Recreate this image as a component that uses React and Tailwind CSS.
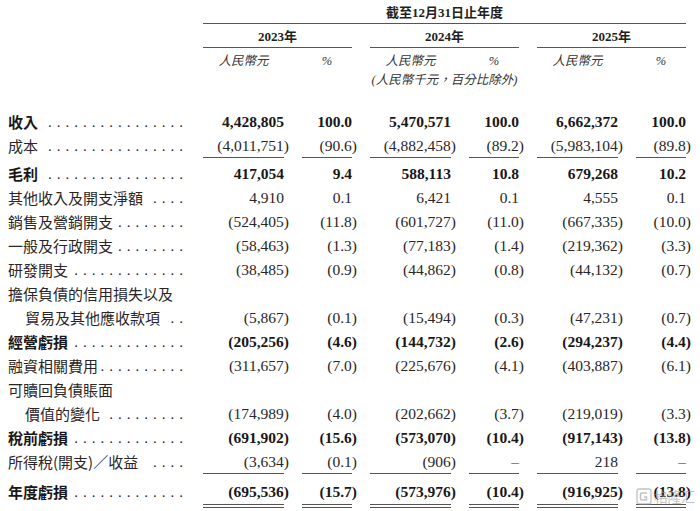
import React from "react";

const GRID = "grid grid-cols-[185px_81px_50px_81px_50px_81px_50px] gap-x-[18px]";

const rows = [
  { label: "收入", bold: true, dots: 16, v: ["4,428,805", "100.0", "5,470,571", "100.0", "6,662,372", "100.0"] },
  { label: "成本", dots: 16, v: ["(4,011,751)", "(90.6)", "(4,882,458)", "(89.2)", "(5,983,104)", "(89.8)"], under: "single" },
  { label: "毛利", bold: true, dots: 16, v: ["417,054", "9.4", "588,113", "10.8", "679,268", "10.2"], mt: "mt-[4px]" },
  { label: "其他收入及開支淨額", dots: 4, v: ["4,910", "0.1", "6,421", "0.1", "4,555", "0.1"] },
  { label: "銷售及營銷開支", dots: 8, v: ["(524,405)", "(11.8)", "(601,727)", "(11.0)", "(667,335)", "(10.0)"] },
  { label: "一般及行政開支", dots: 8, v: ["(58,463)", "(1.3)", "(77,183)", "(1.4)", "(219,362)", "(3.3)"] },
  { label: "研發開支", dots: 13, v: ["(38,485)", "(0.9)", "(44,862)", "(0.8)", "(44,132)", "(0.7)"] },
  { label: "擔保負債的信用損失以及", dots: 0 },
  { label: "貿易及其他應收款項", indent: true, dots: 2, v: ["(5,867)", "(0.1)", "(15,494)", "(0.3)", "(47,231)", "(0.7)"] },
  { label: "經營虧損", bold: true, dots: 13, v: ["(205,256)", "(4.6)", "(144,732)", "(2.6)", "(294,237)", "(4.4)"] },
  { label: "融資相關費用", dots: 10, v: ["(311,657)", "(7.0)", "(225,676)", "(4.1)", "(403,887)", "(6.1)"] },
  { label: "可贖回負債賬面", dots: 0 },
  { label: "價值的變化", indent: true, dots: 9, v: ["(174,989)", "(4.0)", "(202,662)", "(3.7)", "(219,019)", "(3.3)"] },
  { label: "稅前虧損", bold: true, dots: 13, v: ["(691,902)", "(15.6)", "(573,070)", "(10.4)", "(917,143)", "(13.8)"] },
  { label: "所得稅(開支)／收益", dots: 4, v: ["(3,634)", "(0.1)", "(906)", "–", "218", "–"], under: "single" },
  { label: "年度虧損", bold: true, dots: 13, v: ["(695,536)", "(15.7)", "(573,976)", "(10.4)", "(916,925)", "(13.8)"], under: "double", mt: "mt-[6px]" },
];

function Label({ r }) {
  return (
    <div className={`flex items-stretch min-w-0 ${r.indent ? "pl-[25px]" : "pl-[8px]"}`}>
      <span
        className={`whitespace-nowrap font-['Noto_Sans_CJK_TC','Noto_Sans_CJK_SC',sans-serif] text-[15px] leading-[24px] ${
          r.bold ? "font-bold text-[#1a1718]" : "text-[#2a2627]"
        }`}
      >
        {r.label}
      </span>
      {r.dots > 0 && (
        <span className="ml-auto whitespace-nowrap font-['Liberation_Serif',serif] text-[15px] leading-[24px] tracking-[5px] -mr-[3px] text-[#2a2627]">
          {".".repeat(r.dots)}
        </span>
      )}
    </div>
  );
}

function Num({ t, under }) {
  const neg = t.startsWith("(");
  let border = "";
  let lead = "leading-[24px]";
  if (under === "single") {
    border = "border-b border-[#555]";
    lead = "leading-[23px]";
  } else if (under === "double") {
    border = "border-b-[4px] border-double border-[#555]";
    lead = "leading-[24px]";
  }
  return (
    <div className={`text-right ${border} ${lead}`}>
      <span className={neg ? "inline-block -mr-[5px]" : ""}>{t}</span>
    </div>
  );
}

function Row({ r }) {
  const h = r.under === "double" ? "h-[28px]" : "h-[24px]";
  return (
    <div className={`${GRID} ${h} ${r.mt || ""} items-stretch`}>
      <Label r={r} />
      {r.v
        ? r.v.map((t, i) => (
            <div
              key={i}
              className={`font-['Liberation_Serif',serif] text-[15.5px] ${
                r.bold ? "font-bold text-[#1a1718]" : "text-[#2a2627]"
              } flex flex-col`}
            >
              <Num t={t} under={r.under} />
            </div>
          ))
        : null}
    </div>
  );
}

export default function App() {
  const headFont = "font-['Liberation_Serif','Noto_Sans_CJK_TC',serif]";
  const ital = "italic font-['Liberation_Serif','Noto_Sans_CJK_TC',serif] text-[12.5px] text-[#333]";
  const yearCell = `text-center border-b border-[#555] pt-[3px] leading-[20px] text-[13px] font-bold ${headFont}`;
  return (
    <div className="w-[700px] h-[511px] bg-white relative overflow-hidden text-[#231f20]">
      <div className={`${GRID} h-[24px]`}>
        <div className={`col-start-2 col-span-6 ${yearCell}`}>截至12月31日止年度</div>
      </div>
      <div className={`${GRID} h-[24px]`}>
        <div className={`col-start-2 col-span-2 ${yearCell}`}>2023年</div>
        <div className={`col-span-2 ${yearCell}`}>2024年</div>
        <div className={`col-span-2 ${yearCell}`}>2025年</div>
      </div>
      <div className={`${GRID} h-[23px] pt-[3px] leading-[20px]`}>
        <div className={`col-start-2 text-center ${ital}`}>人民幣元</div>
        <div className={`text-center ${ital}`}>%</div>
        <div className={`text-center ${ital}`}>人民幣元</div>
        <div className={`text-center ${ital}`}>%</div>
        <div className={`text-center ${ital}`}>人民幣元</div>
        <div className={`text-center ${ital}`}>%</div>
      </div>
      <div className={`${GRID} h-[19px] leading-[19px]`}>
        <div className={`col-start-4 col-span-2 text-center whitespace-nowrap ${ital}`}>(人民幣千元，百分比除外)</div>
      </div>
      <div className="h-[20px]" />
      {rows.map((r, i) => (
        <Row key={i} r={r} />
      ))}

      <div className="absolute left-[636px] top-[486px] flex items-center gap-[2px] opacity-60 pointer-events-none">
        <svg width="16" height="17" viewBox="0 0 16 17">
          <rect x="1" y="1" width="14" height="15" rx="2" fill="none" stroke="#9a9a9a" strokeWidth="1.3" />
          <path d="M11 5 H6 Q4.5 5 4.5 6.5 V10.5 Q4.5 12 6 12 H10.5 V9 H8" fill="none" stroke="#9a9a9a" strokeWidth="1.5" />
        </svg>
        <span className="font-['Noto_Sans_CJK_SC',sans-serif] text-[14px] text-[#9a9a9a] tracking-[-0.5px]">格隆汇</span>
      </div>
    </div>
  );
}
